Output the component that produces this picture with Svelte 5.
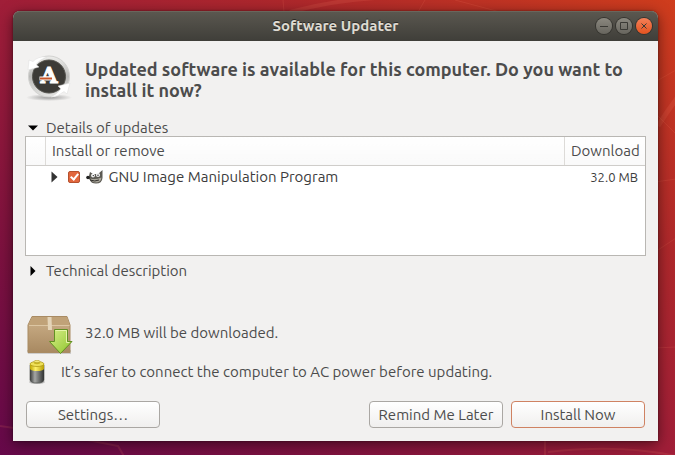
<script>
  let detailsOpen = true;
  let technicalOpen = false;

  let updates = [
    { name: 'GNU Image Manipulation Program', size: '32.0 MB', checked: true }
  ];
</script>

<div class="desktop">
  <svg class="wallpaper" viewBox="0 0 675 455" preserveAspectRatio="none" aria-hidden="true">
    <g fill="none" stroke="#ff8a6a" stroke-opacity="0.14">
      <path d="M283 0L284 12M425 0L418 12M455 0L500 12" />
      <path d="M290 12Q330 1 375 -2" stroke-width="4" />
      <path d="M658 126Q668 110 678 97" stroke-width="5" />
      <path d="M655 82L676 70M655 113L676 134M655 182L676 179M655 252L676 238M655 348L676 347" />
      <path d="M0 426Q60 434 118 446L125 458M545 440V456M548 452Q620 444 676 456" stroke-width="2" />
    </g>
  </svg>

  <main class="window">
    <header class="titlebar">
      <h1>Software Updater</h1>
      <div class="controls">
        <button class="control" aria-label="Minimize">
          <svg viewBox="0 0 16 16"><path d="M4 8.500H12" /></svg>
        </button>
        <button class="control" aria-label="Maximize">
          <svg viewBox="0 0 16 16"><path d="M4.500 4.500H11.500V11.500H4.500Z" /></svg>
        </button>
        <button class="control close" aria-label="Close">
          <svg viewBox="0 0 16 16"><path d="M5.500 5.500L10.500 10.500M10.500 5.500L5.500 10.500" /></svg>
        </button>
      </div>
    </header>

    <div class="content">
      <div class="intro">
        <svg class="updater-icon" viewBox="0 0 48 48" aria-hidden="true">
          <defs>
            <linearGradient id="ring" x1="0" y1="0" x2="0" y2="1">
              <stop offset="0" stop-color="#eeeeec" />
              <stop offset="0.500" stop-color="#b9b9b7" />
              <stop offset="1" stop-color="#e4e4e2" />
            </linearGradient>
            <radialGradient id="floor">
              <stop offset="0" stop-color="#777" stop-opacity="0.700" />
              <stop offset="1" stop-color="#777" stop-opacity="0" />
            </radialGradient>
          </defs>
          <ellipse cx="24" cy="43.500" rx="23" ry="3.500" fill="url(#floor)" />
          <circle cx="24" cy="22.500" r="20.500" fill="url(#ring)" stroke="#d2d2d0" />
          <circle cx="24" cy="22.500" r="16.500" fill="#3c3b37" stroke="#55544f" />
          <path d="M4 6L3 16L14 13L11 10.500Q15 5 22 3Q13 2 8 7.500Z" fill="#fff" stroke="#ddd" stroke-width="0.500" />
          <path d="M33 32L45 29L42 40L39 37.500Q33 43 26 43Q32 40 36 35Z" fill="#fff" stroke="#ddd" stroke-width="0.500" />
          <text x="24" y="29" text-anchor="middle">A</text>
          <path d="M14.500 24.500H27.500" stroke="#fff" stroke-width="4" />
          <path d="M15 24.500H27" stroke="#c9572b" stroke-width="2" />
        </svg>
        <h2>Updated software is available for this computer. Do you want to install it now?</h2>
      </div>

      <button class="expander" aria-expanded={detailsOpen} on:click={() => (detailsOpen = !detailsOpen)}>
        <svg class:open={detailsOpen} viewBox="0 0 10 10" aria-hidden="true"><path d="M2.500 0L7.500 5L2.500 10Z" /></svg>
        Details of updates
      </button>

      <div class="tree">
        {#if detailsOpen}
          <table>
            <thead>
              <tr>
                <th class="status" aria-label="Status"></th>
                <th>Install or remove</th>
                <th class="download">Download</th>
              </tr>
            </thead>
            <tbody>
              {#each updates as update}
                <tr>
                  <td></td>
                  <td>
                    <div class="package">
                      <button class="row-toggle" aria-label="Show packages">
                        <svg viewBox="0 0 7 12" aria-hidden="true"><path d="M0.500 0.500L6.500 6L0.500 11.500Z" /></svg>
                      </button>
                      <label>
                        <input type="checkbox" bind:checked={update.checked} />
                        <svg class="gimp" viewBox="0 0 17 14" aria-hidden="true">
                          <path d="M3 6L4 2L7 4H12L16.500 0V8Q16 13.500 10 13.500Q5 13.500 4 10L3 9Z" fill="#5b5952" />
                          <path d="M4.500 8.500Q9 10 15.500 7.500Q15 12.500 10 12.500Q5.500 12.500 4.500 8.500Z" fill="#aaa69b" />
                          <circle cx="7" cy="5.500" r="1.900" fill="#f6f6f6" />
                          <circle cx="12" cy="5" r="2.100" fill="#f0f0f0" />
                          <circle cx="7.300" cy="5.600" r="0.700" fill="#222" />
                          <circle cx="12" cy="5.200" r="0.700" fill="#222" />
                          <ellipse cx="2" cy="7.500" rx="1.800" ry="1.800" fill="#222" />
                          <path d="M4 10Q9 12 13 10" fill="none" stroke="#33312d" />
                        </svg>
                        <span>{update.name}</span>
                      </label>
                    </div>
                  </td>
                  <td class="size">{update.size}</td>
                </tr>
              {/each}
            </tbody>
          </table>
        {/if}
      </div>

      <button class="expander technical" aria-expanded={technicalOpen} on:click={() => (technicalOpen = !technicalOpen)}>
        <svg class:open={technicalOpen} viewBox="0 0 10 10" aria-hidden="true"><path d="M2.500 0L7.500 5L2.500 10Z" /></svg>
        Technical description
      </button>

      <div class="info">
        <svg class="box-icon" viewBox="0 0 48 42" aria-hidden="true">
          <defs>
            <linearGradient id="box" x1="0" y1="0" x2="0" y2="1">
              <stop offset="0" stop-color="#cdb18a" />
              <stop offset="1" stop-color="#a88961" />
            </linearGradient>
            <linearGradient id="arrow" x1="0" y1="0" x2="1" y2="1">
              <stop offset="0" stop-color="#d9ee8a" />
              <stop offset="1" stop-color="#8dc52c" />
            </linearGradient>
          </defs>
          <path d="M2 38H46V42H3Z" fill="#777" fill-opacity="0.300" />
          <path d="M7 4.500H42L45 13V40.500H3V13Z" fill="url(#box)" stroke="#a98b63" />
          <path d="M7 5H42L44.500 13H3.500Z" fill="#c0a278" />
          <path d="M4 13.500H44.500" stroke="#dcc6a3" />
          <path d="M22.500 5H26.500L27 18H23Z" fill="#e4d4b8" />
          <path d="M29.500 17.500H42.500V29.500H47L35.500 41.500L24.500 29.500H29.500Z" fill="url(#arrow)" stroke="#629023" stroke-linejoin="round" />
          <path d="M30.500 18.500H41.500V30.500H44.500" fill="none" stroke="#e6f5a9" />
        </svg>
        <p>32.0 MB will be downloaded.</p>
      </div>

      <div class="info power">
        <svg class="battery-icon" viewBox="0 0 24 24" aria-hidden="true">
          <defs>
            <linearGradient id="cell" x1="0" y1="0" x2="1" y2="0">
              <stop offset="0" stop-color="#3b3c3c" />
              <stop offset="0.350" stop-color="#a5a6a4" />
              <stop offset="1" stop-color="#2e3030" />
            </linearGradient>
            <linearGradient id="cap" x1="0" y1="0" x2="1" y2="0">
              <stop offset="0" stop-color="#bda500" />
              <stop offset="0.400" stop-color="#fff16a" />
              <stop offset="1" stop-color="#b69d00" />
            </linearGradient>
          </defs>
          <ellipse cx="12" cy="22" rx="8" ry="2" fill="#777" fill-opacity="0.400" />
          <path d="M5 5V20Q5.500 23 12 23Q18.500 23 19 20V5Z" fill="url(#cell)" stroke="#424442" stroke-width="0.600" />
          <path d="M5 4V9Q6.500 11 12 11Q17.500 11 19 9V4Z" fill="url(#cap)" />
          <ellipse cx="12" cy="4" rx="7" ry="2.500" fill="#eee05a" stroke="#a89010" stroke-width="0.700" />
          <path d="M9 1.500V3.500Q12 5 15 3.500V1.500Z" fill="#c9b522" />
          <ellipse cx="12" cy="1.500" rx="3" ry="1.200" fill="#f2e87c" stroke="#a89010" stroke-width="0.500" />
        </svg>
        <p>It’s safer to connect the computer to AC power before updating.</p>
      </div>

      <footer>
        <button class="action settings">Settings…</button>
        <button class="action">Remind Me Later</button>
        <button class="action primary">Install Now</button>
      </footer>
    </div>
  </main>
</div>

<style>
  :global(body) {
    margin: 0;
  }
  .desktop {
    position: relative;
    display: flex;
    box-sizing: border-box;
    min-height: 100vh;
    padding: 11px 17px 14px 13px;
    background: linear-gradient(to top right, #66094a 0%, #7c113f 22%, #a01e38 50%, #ae282b 72%, #cf3d1d 100%);
    color: #4c4c4c;
    font-family: Ubuntu, "Noto Sans", sans-serif;
    font-size: 15px;
    line-height: 16px;
  }
  .wallpaper {
    position: absolute;
    inset: 0;
    width: 100%;
    height: 100%;
  }
  button {
    padding: 0;
    border: none;
    background: none;
    color: inherit;
    font: inherit;
    cursor: pointer;
  }
  h1,
  h2,
  p {
    margin: 0;
  }
  .window {
    position: relative;
    display: flex;
    flex: 1;
    flex-direction: column;
    min-width: 0;
    border-radius: 7px 7px 0 0;
    background: #f2f1f0;
    box-shadow: 0 3px 14px rgba(0, 0, 0, 0.5), 0 0 2px rgba(0, 0, 0, 0.5);
  }
  .titlebar {
    display: grid;
    grid-template-columns: 1fr auto 1fr;
    align-items: center;
    height: 30px;
    padding: 0 6px;
    border-radius: 7px 7px 0 0;
    background: linear-gradient(#5b5850, #3f3e39);
    box-shadow: inset 0 1px #6a665c;
  }
  h1 {
    grid-column: 2;
    color: #dfdbd2;
    font-size: 15px;
    font-weight: bold;
    text-shadow: 0 -1px #2b2a27;
  }
  .controls {
    display: flex;
    justify-content: flex-end;
    gap: 4px;
  }
  .control {
    width: 16px;
    height: 16px;
    border-radius: 50%;
    background: linear-gradient(#8b887f, #67655e);
    box-shadow: 0 0 0 1px #35342f;
  }
  .control svg {
    display: block;
    fill: none;
    stroke: #3a3934;
  }
  .control.close {
    background: linear-gradient(#f58058, #e5531f);
  }
  .content {
    display: flex;
    flex: 1;
    flex-direction: column;
    padding: 13px;
  }
  .intro {
    display: flex;
    gap: 12px;
    min-height: 52px;
    margin-bottom: 14px;
  }
  .updater-icon {
    flex: none;
    width: 48px;
    height: 48px;
  }
  .updater-icon text {
    fill: #fff;
    stroke: #fff;
    stroke-width: 1px;
    font: bold 22px "DejaVu Serif", serif;
  }
  h2 {
    padding-top: 5px;
    font-size: 18px;
    line-height: 21px;
  }
  .intro,
  .info {
    margin-left: -1px;
  }
  .expander {
    display: flex;
    align-items: center;
    align-self: flex-start;
    gap: 8px;
    margin-left: 2px;
  }
  .expander svg {
    width: 10px;
    height: 10px;
    fill: #000;
  }
  .expander svg.open {
    transform: rotate(90deg);
  }
  .technical {
    margin: 7px 0 33px 2px;
  }
  .tree {
    flex: 1;
    box-sizing: border-box;
    min-height: 120px;
    margin: 0 -1px;
    border: 1px solid #b9b7b3;
    background: #fff;
  }
  table {
    width: 100%;
    border-collapse: collapse;
    table-layout: fixed;
  }
  th {
    height: 28px;
    padding: 0 6px;
    border-bottom: 1px solid #cfcdca;
    background: linear-gradient(#fff, #f9f9f9);
    font-weight: normal;
    text-align: left;
  }
  th + th {
    border-left: 1px solid #dddbd8;
  }
  .status {
    width: 7px;
  }
  .download {
    width: 68px;
  }
  td {
    height: 22px;
    padding: 0 7px 0 5px;
    color: #3c3c3c;
  }
  .package,
  label {
    display: flex;
    align-items: center;
  }
  .package {
    gap: 10px;
  }
  label {
    gap: 6px;
  }
  .row-toggle {
    width: 7px;
    height: 12px;
  }
  .row-toggle svg {
    display: block;
    fill: #333;
  }
  input {
    position: relative;
    width: 12px;
    height: 12px;
    margin: 0;
    border: 1px solid #b5512e;
    border-radius: 2px;
    background: #e2673d;
    appearance: none;
  }
  input:not(:checked) {
    border-color: #aaa;
    background: #fff;
  }
  input:checked::after {
    position: absolute;
    top: 0;
    left: 3px;
    width: 3px;
    height: 6px;
    border: solid #fff;
    border-width: 0 2px 2px 0;
    content: "";
    transform: rotate(40deg);
  }
  .gimp {
    width: 17px;
    height: 14px;
  }
  .size {
    font-size: 13px;
    text-align: right;
  }
  .info {
    display: flex;
    align-items: center;
    gap: 12px;
  }
  .box-icon {
    width: 48px;
    height: 42px;
  }
  .power {
    margin-top: 6px;
  }
  .battery-icon {
    width: 24px;
    height: 24px;
  }
  footer {
    display: flex;
    gap: 8px;
    margin-top: 17px;
  }
  .action {
    box-sizing: border-box;
    width: 134px;
    height: 27px;
    border: 1px solid #aaa7a3;
    border-radius: 4px;
    background: linear-gradient(#fff, #f0efee);
  }
  .settings {
    margin-right: auto;
  }
  .primary {
    border-color: #cf8262;
  }
</style>
